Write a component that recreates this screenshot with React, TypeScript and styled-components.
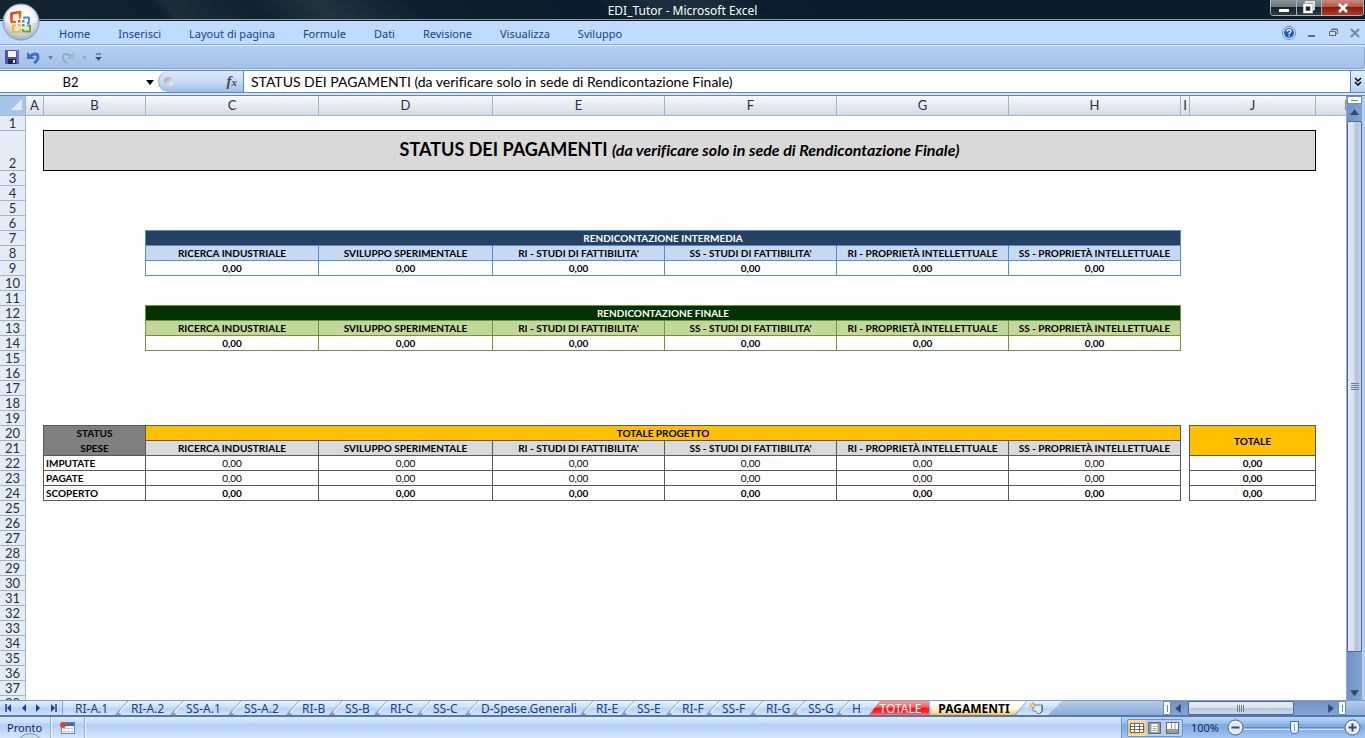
import React, { useState } from "react";
import styled, { createGlobalStyle, css } from "styled-components";

const UI_FONT = '"Noto Sans", "DejaVu Sans", sans-serif';
const SHEET_FONT = 'Lato, "Open Sans", sans-serif';

const GlobalStyle = createGlobalStyle`
  * { box-sizing: border-box; }
  body { margin: 0; overflow: hidden; font-family: ${UI_FONT}; font-size: 11px; font-variant-ligatures: none; }
  button, input { font: inherit; color: inherit; }
  button { border: 0; padding: 0; background: none; }
`;

const Window = styled.div`
  display: flex;
  flex-direction: column;
  height: 100vh;
  background: #d6e5f7;
  position: relative;
`;

/* ---------- title bar ---------- */

const TitleBar = styled.header`
  display: flex;
  flex: none;
  height: 21px;
  justify-content: center;
  position: relative;
  color: #fff;
  line-height: 21px;
  border-bottom: 1px solid #101820;
  box-shadow: inset 0 -1px 0 #8d9ba5;
  background: linear-gradient(52deg, #132431 0%, #0f202e 12%, #1c2d3a 13%, #10212f 19%, #22333f 24%, #0e1f30 31%, #0b1c2e 44%, #1c2e3d 48%, #1d2f3e 52%, #0c1d2f 56%, #0a1b2c 80%, #0c1e2d 100%);
`;

const Caption = styled.h1`
  margin: 0;
  font-size: 12px;
  font-weight: 400;
`;

const WindowControls = styled.div`
  position: absolute;
  right: 1px;
  top: 0;
  display: flex;
  height: 16px;
  border: 1px solid #a9b3ba;
  border-top: 0;
  border-radius: 0 0 4px 4px;
  overflow: hidden;
`;

const ControlButton = styled.button<{ $wide?: boolean; $close?: boolean }>`
  display: flex;
  align-items: center;
  justify-content: center;
  width: ${(p) => (p.$wide ? 42 : 25)}px;
  background: ${(p) =>
    p.$close
      ? "linear-gradient(#c58b82 0%, #b4574a 45%, #8c1a0c 50%, #b83a20 100%)"
      : "linear-gradient(#8a949c 0%, #6a757e 45%, #16222e 50%, #2d3b47 100%)"};
  & + & { border-left: 1px solid #a9b3ba; }
`;

/* ---------- ribbon ---------- */

const RibbonTabs = styled.nav`
  display: flex;
  flex: none;
  height: 24px;
  padding: 0 4px 0 45px;
  background: #bfdbff;
  border-bottom: 1px solid #86a8d4;
  align-items: center;
`;

const RibbonTab = styled.button`
  padding: 2px 14px 0;
  color: #15428b;
  line-height: 22px;
  white-space: nowrap;
`;

const DocControls = styled.div`
  display: flex;
  margin-left: auto;
  align-items: center;
  gap: 9px;
`;

const PlainButton = styled.button`
  display: flex;
  align-items: center;
  justify-content: center;
`;

const QuickAccess = styled.div`
  display: flex;
  flex: none;
  align-items: center;
  height: 24px;
  padding-left: 5px;
  gap: 8px;
  background: linear-gradient(#b6d0f0, #a5c0e8);
  border: 1px solid #86a8d4;
  border-top-color: #e8f2ff;
  border-left: 0;
  border-radius: 0 4px 4px 0;
`;

const OfficeButton = styled.button`
  position: absolute;
  left: 2px;
  top: 3px;
  width: 38px;
  height: 38px;
`;

/* ---------- formula bar ---------- */

const FormulaBar = styled.div`
  display: flex;
  flex: none;
  height: 23px;
  margin-top: 1px;
  border-top: 1px solid #5e88b8;
  border-bottom: 1px solid #5e88b8;
  background: #fff;
`;

const NameBox = styled.input`
  width: 141px;
  border: 0;
  padding: 0;
  text-align: center;
  font-family: ${SHEET_FONT};
  font-size: 13px;
  background: #fff;
  outline: 0;
`;

const NameArrow = styled.button`
  display: flex;
  width: 17px;
  align-items: center;
  justify-content: center;
`;

const FunctionArea = styled.div`
  display: flex;
  width: 86px;
  align-items: center;
  justify-content: space-between;
  padding: 0 6px 0 5px;
  border-left: 1px solid #8fa9cc;
  border-right: 1px solid #5e88b8;
  border-radius: 11px 0 0 11px;
  background: linear-gradient(#dce9fa, #c7dbf5 50%, #9fbfe8);
`;

const Knob = styled.span`
  width: 9px;
  height: 9px;
  border-radius: 50%;
  background: linear-gradient(135deg, #9aa4b8, #f4f7fb);
`;

const FxButton = styled.button`
  font-family: "Liberation Serif", serif;
  font-style: italic;
  font-size: 15px;
  font-weight: 700;
  color: #4a4a4a;
  small { font-size: 11px; }
`;

const FormulaInput = styled.input`
  flex: 1;
  min-width: 0;
  border: 0;
  padding: 0 7px;
  font-family: ${SHEET_FONT};
  font-size: 14px;
  color: #000;
  background: #fff;
  outline: 0;
`;

const ExpandButton = styled(PlainButton)`
  width: 15px;
  border-left: 1px solid #5e88b8;
  background: linear-gradient(#e4effd, #b5d0f2);
`;

/* ---------- sheet ---------- */

const Workspace = styled.main`
  display: flex;
  flex: 1;
  min-height: 0;
  margin-top: 2px;
  border-top: 1px solid #5e88b8;
`;

const SheetView = styled.div`
  flex: 1;
  min-width: 0;
  overflow: hidden;
  background: #fff;
`;

const Grid = styled.table`
  table-layout: fixed;
  width: 1382px;
  border-collapse: separate;
  border-spacing: 0;
  font-family: ${SHEET_FONT};
  font-size: 10px;
  line-height: 14px;
  color: #000;
`;

const Corner = styled.td`
  height: 20px;
  padding: 0 3px 3px 0;
  background: #a9c4e9;
  border-right: 1px solid #9eb6ce;
  border-bottom: 1px solid #9eb6ce;
  text-align: right;
  svg { display: block; margin-left: auto; }
`;

const ColumnHead = styled.th`
  height: 20px;
  padding: 0;
  font-size: 13px;
  line-height: 19px;
  font-weight: 400;
  color: #27323c;
  background: linear-gradient(#f8fafc, #e3e8ef 60%, #d4dbe5);
  border-right: 1px solid #9eb6ce;
  border-bottom: 1px solid #9eb6ce;
`;

const RowHead = styled.th`
  padding: 0;
  font-size: 13px;
  line-height: 14px;
  font-weight: 400;
  vertical-align: bottom;
  color: #27323c;
  background: #e4ecf7;
  border-right: 1px solid #9eb6ce;
  border-bottom: 1px solid #9eb6ce;
`;

const Row = styled.tr<{ $tall?: boolean }>`
  height: ${(p) => (p.$tall ? 40 : 15)}px;
`;

const Blank = styled.td`
  padding: 0;
`;

type CellProps = { $line: string; $fill?: string; $ink?: string; $bold?: boolean; $left?: boolean };

const Cell = styled.td<CellProps>`
  padding: 0 2px;
  overflow: hidden;
  white-space: nowrap;
  text-align: ${(p) => (p.$left ? "left" : "center")};
  font-weight: ${(p) => (p.$bold ? 700 : 400)};
  color: ${(p) => p.$ink ?? "#000"};
  background: ${(p) => p.$fill ?? "#fff"};
  border-right: 1px solid ${(p) => p.$line};
  border-bottom: 1px solid ${(p) => p.$line};
  box-shadow: -1px 0 0 ${(p) => p.$line}, 0 -1px 0 ${(p) => p.$line}, -1px -1px 0 ${(p) => p.$line};
`;

const SheetTitle = styled.strong`
  font-size: 18px;
`;

const SheetSubtitle = styled.em`
  font-size: 16px;
  font-weight: 700;
`;

const StackedLines = styled.div`
  display: grid;
  gap: 1px;
`;

/* ---------- scroll bars ---------- */

const ScrollColumn = styled.div`
  display: flex;
  flex: none;
  flex-direction: column;
  width: 19px;
  border-left: 1px solid #8fadd6;
  border-right: 3px solid #b4cdf0;
  background: linear-gradient(90deg, #6f93c3, #7fa3d3);
`;

const SplitHandle = styled.span<{ $vertical?: boolean }>`
  flex: none;
  display: flex;
  align-items: center;
  justify-content: center;
  width: ${(p) => (p.$vertical ? "8px" : "auto")};
  height: ${(p) => (p.$vertical ? "auto" : "8px")};
  border: 1px solid #6c8fc0;
  background: #fff;
  &::after {
    content: "";
    width: ${(p) => (p.$vertical ? 1 : 7)}px;
    height: ${(p) => (p.$vertical ? 7 : 1)}px;
    background: #5f86b8;
  }
`;

const ArrowButton = styled(PlainButton)`
  flex: none;
  width: 15px;
  height: 15px;
`;

const VerticalTrack = styled.div`
  flex: 1;
  display: flex;
  flex-direction: column;
  padding: 2px 0 33px;
`;

const thumb = css`
  display: flex;
  align-items: center;
  justify-content: center;
  border: 1px solid #4f6a98;
  border-radius: 2px;
`;

const VerticalThumb = styled.button`
  ${thumb}
  flex: 1;
  background: linear-gradient(90deg, #e3e8ef, #d7dfe9 45%, #b3c2d8 60%, #c7d2e2);
`;

/* ---------- sheet tabs ---------- */

const TabBar = styled.div`
  display: flex;
  flex: none;
  height: 17px;
  border-top: 1px solid #7d9fce;
  border-bottom: 2px solid #5379b3;
  background: linear-gradient(#b5cbec, #8fadd8);
`;

const TabNav = styled.div`
  display: flex;
  width: 63px;
  align-items: center;
  justify-content: space-around;
  padding: 0 2px;
  border-right: 1px solid #86a3cf;
  background: linear-gradient(#dfebfb, #c4daf7 50%, #b5d1f6 52%, #cfe2fa);
`;

const TabStrip = styled.div`
  display: flex;
  padding-left: 12px;
  color: #15428b;
  font-size: 12px;
  line-height: 16px;
  background: linear-gradient(#e9f2fd, #cfe1f9 45%, #b7d2f7 50%, #d3e4fb);
`;

const SheetTab = styled.button<{ $w: number }>`
  display: flex;
  justify-content: space-between;
  width: ${(p) => p.$w}px;
  padding-right: 2px;
  white-space: nowrap;
  svg { flex: none; }
`;

const RedTab = styled.button`
  width: 63px;
  padding-left: 6px;
  text-align: center;
  color: #fff;
  background: linear-gradient(#fb9a9a, #f76060 45%, #ff0d0d 50%, #f43030 80%, #f98080);
  clip-path: polygon(2px 100%, 4px 90%, 14px 0, 100% 0, 100% 100%);
`;

const ActiveTab = styled.button`
  width: 97px;
  padding-right: 7px;
  text-align: center;
  font-weight: 700;
  font-size: 12px;
  line-height: 16px;
  color: #000;
  background: linear-gradient(#fff, #fff6d8 60%, #fbd876 85%, #f0b850);
  clip-path: polygon(1px 0, 100% 0, calc(100% - 12px) 100%, 2px 100%);
`;

const InsertTab = styled(PlainButton)`
  width: 46px;
  margin-left: -10px;
  padding-right: 6px;
  background: linear-gradient(#e9f2fd, #cfe1f9 45%, #b7d2f7 50%, #d3e4fb);
  clip-path: polygon(12px 0, 100% 0, calc(100% - 14px) 100%, 0 100%);
`;

const HorizontalScroll = styled.div`
  display: flex;
  width: 183px;
  margin-left: auto;
  margin-right: 19px;
  background: linear-gradient(#6f93c3, #84a5d2);
`;

const HorizontalTrack = styled.div`
  display: flex;
  flex: 1;
  padding-left: 2px;
`;

const HorizontalThumb = styled.button`
  ${thumb}
  width: 106px;
  background: linear-gradient(#e9edf3, #dbe2ec 45%, #b9c7dc 55%, #cdd7e6);
`;

/* ---------- status bar ---------- */

const StatusBar = styled.footer`
  display: flex;
  flex: none;
  height: 21px;
  overflow: hidden;
  position: relative;
  color: #15275c;
  line-height: 20px;
  background: linear-gradient(#dceafb 0%, #c3dbf9 30%, #b2cff4 35%, #c4dbf8 70%, #d6e6fb 100%);
`;

const StatusItem = styled.span`
  display: flex;
  align-items: center;
  padding: 0 8px;
  border-right: 1px solid #8fb0de;
  box-shadow: 1px 0 0 #f2f8ff;
`;

const StatusText = styled(StatusItem)`
  padding-left: 7px;
`;

const StartOrb = styled.span`
  position: absolute;
  left: 16px;
  top: 16px;
  width: 28px;
  height: 28px;
  border-radius: 50%;
  border: 1px solid #7d97a8;
  background: #c5dceb;
`;

const ViewArea = styled.div`
  display: flex;
  margin-left: auto;
  align-items: center;
  width: 244px;
  padding: 0 4px 0 5px;
  border-left: 1px solid #7396c9;
  background: linear-gradient(#b9d3f5 0%, #9dbfee 30%, #7faae3 35%, #8db5eb 70%, #a5c8f5 100%);
`;

const ViewButtons = styled.div`
  display: flex;
  height: 18px;
  border: 1px solid #7396c9;
  border-radius: 2px;
  background: #b5cff2;
`;

const ViewButton = styled(PlainButton)<{ $on?: boolean }>`
  width: 18px;
  background: ${(p) => (p.$on ? "linear-gradient(#fbdc9c, #f9b84a 60%, #fde08a)" : "transparent")};
`;

const ZoomLabel = styled.label`
  width: 44px;
  text-align: center;
`;

const ZoomSlider = styled.input`
  appearance: none;
  flex: 1;
  min-width: 0;
  height: 16px;
  margin: 0;
  background: linear-gradient(#5f88c0, #5f88c0) center / 100% 1px no-repeat,
    linear-gradient(#dceafb, #dceafb) 0 9px / 100% 1px no-repeat;
  &::-webkit-slider-thumb {
    appearance: none;
    width: 9px;
    height: 13px;
    border: 1px solid #4a6a9c;
    border-radius: 1px 1px 5px 5px;
    background: linear-gradient(#8aa4ca, #8aa4ca) center / 1px 7px no-repeat, #eaf1fa;
  }
`;

/* ---------- drawings ---------- */

const Triangle = ({ dir, color = "#33466b", size = 7 }: { dir: "up" | "down" | "left" | "right"; color?: string; size?: number }) => {
  const d = { up: "M0 7L4 2L8 7Z", down: "M0 2L4 7L8 2Z", left: "M6 0L1 4L6 8Z", right: "M2 0L7 4L2 8Z" }[dir];
  return (
    <svg width={size} height={size} viewBox="0 0 8 8" aria-hidden="true"><path d={d} fill={color} /></svg>
  );
};

const Slash = () => (
  <svg width="14" height="14" viewBox="0 0 14 14" aria-hidden="true">
    <path d="M0 14L4 9L6 14Z" fill="#7f9dcd" />
    <path d="M1 13L13 0" stroke="#8fa9d0" strokeWidth="1" />
    <path d="M4 12L14 1" stroke="#fff" strokeWidth="1" />
  </svg>
);

const OfficeLogo = () => (
  <svg width="38" height="38" viewBox="0 0 38 38" aria-hidden="true">
    <defs>
      <radialGradient id="orb" cx="50%" cy="35%" r="65%">
        <stop offset="0" stopColor="#fff" />
        <stop offset="0.6" stopColor="#dfe4ec" />
        <stop offset="1" stopColor="#a6b0c2" />
      </radialGradient>
      <linearGradient id="red" x1="0" x2="1" y1="0" y2="1">
        <stop offset="0" stopColor="#d8340c" />
        <stop offset="1" stopColor="#f58a20" />
      </linearGradient>
    </defs>
    <circle cx="19" cy="19" r="18" fill="url(#orb)" stroke="#8c98ae" />
    <path d="M3 19a16 16 0 0 1 32 0q-16 5-32 0Z" fill="#fff" opacity=".5" />
    <g fill="none" strokeLinejoin="round">
      <path d="M14 19H9.500V10.500L18 9V15.500" stroke="url(#red)" strokeWidth="2.600" />
      <path d="M22 16V14.500H27V20H25" stroke="#3f8fd8" strokeWidth="1.800" />
      <path d="M14 22.500H11V29H18V26" stroke="#f7bd28" strokeWidth="2.200" />
      <path d="M21 26V28.500H28V22.500H25" stroke="#6aa82c" strokeWidth="2" />
    </g>
    <g>
      <rect x="16" y="17" width="2.500" height="2.500" fill="#e2500f" />
      <rect x="20" y="17" width="2.500" height="2.500" fill="#3f8fd8" />
      <rect x="16" y="21" width="2.500" height="2.500" fill="#f5b81c" />
      <rect x="20" y="21" width="2.500" height="2.500" fill="#6aa82c" />
    </g>
  </svg>
);

const SaveIcon = () => (
  <svg width="14" height="14" viewBox="0 0 14 14" aria-hidden="true">
    <path d="M0 0H14V14H1L0 13Z" fill="#5252b4" />
    <rect x="3" y="1" width="8" height="6" fill="#f4f7ff" />
    <rect x="3" y="9" width="8" height="5" fill="#22224e" />
    <rect x="8" y="10" width="2" height="3" fill="#fff" />
    <path d="M11 1H13V13" stroke="#8f8fe0" fill="none" />
  </svg>
);

const UndoIcon = ({ faded }: { faded?: boolean }) => (
  <svg width="13" height="13" viewBox="0 0 13 13" aria-hidden="true" transform={faded ? "scale(-1 1)" : undefined}>
    <path d="M3 6C6 2 11 2 11 6C11 9 9 11 7 12" fill="none" stroke={faded ? "#8ea6cb" : "#3c6fd0"} strokeWidth={faded ? 1.800 : 2.800} />
    <path d="M0 1V8H8Z" fill={faded ? "#9fb6d8" : "#3c6fd0"} />
  </svg>
);

const MoreIcon = () => (
  <svg width="7" height="8" viewBox="0 0 7 8" aria-hidden="true">
    <path d="M1 1H6" stroke="#2c4a80" />
    <path d="M0 4H7L3.500 7.500Z" fill="#2c4a80" />
  </svg>
);

const HelpIcon = () => (
  <svg width="14" height="14" viewBox="0 0 14 14" aria-hidden="true">
    <circle cx="7" cy="7" r="6.500" fill="#e6f0ff" stroke="#5a86c8" />
    <circle cx="7" cy="7" r="5" fill="#1e56d0" />
    <path d="M5 5.500Q5 3.800 7 3.800T9 5.500Q9 6.500 7 7.500V8.300M7 9.300V10.600" fill="none" stroke="#fff" strokeWidth="1.400" />
  </svg>
);

const MacroIcon = () => (
  <svg width="17" height="14" viewBox="0 0 17 14" aria-hidden="true">
    <rect x="2.500" y="1.500" width="13" height="11" fill="#f5f8ff" stroke="#6c86b4" />
    <path d="M3 2H15V5H3Z" fill="#3c68c0" />
    <path d="M4 7.500H14M4 10.500H14" stroke="#a6b6d4" strokeDasharray="3 1" />
    <circle cx="4" cy="4" r="3" fill="#d84a28" />
  </svg>
);

const InsertIcon = () => (
  <svg width="15" height="12" viewBox="0 0 15 12" aria-hidden="true">
    <path d="M4 3H13.500V9L11 11.500H8Q8 9 6 9H4Z" fill="#dfe9f8" stroke="#6d83ab" />
    <path d="M11 11L13 9V3" fill="none" stroke="#405a8a" />
    <path d="M3.500 0V7M0 3.500H7M1 1L6 6M6 1L1 6" stroke="#e59a24" />
    <circle cx="3.500" cy="3.500" r="1.200" fill="#fff3c0" />
  </svg>
);

const NavIcon = ({ dir, bar }: { dir: "left" | "right"; bar?: boolean }) => (
  <svg width="8" height="8" viewBox="0 0 8 8" aria-hidden="true" transform={dir === "right" ? "scale(-1 1)" : undefined}>
    {bar && <path d="M1 0V8" stroke="#15428b" strokeWidth="1.500" />}
    <path d="M6 0V8L2 4Z" fill="#15428b" />
  </svg>
);

const RoundIcon = ({ plus }: { plus?: boolean }) => (
  <svg width="17" height="17" viewBox="0 0 17 17" aria-hidden="true">
    <circle cx="8.500" cy="8.500" r="7.500" fill="#dfe8f5" stroke="#4a6288" />
    <circle cx="8.500" cy="8.500" r="6" fill="none" stroke="#fff" />
    <path d={plus ? "M4.500 8.500H12.500M8.500 4.500V12.500" : "M4.500 8.500H12.500"} stroke="#3e4e68" strokeWidth="2" />
  </svg>
);

const NormalViewIcon = () => (
  <svg width="14" height="12" viewBox="0 0 14 12" aria-hidden="true">
    <path d="M.5 1.500H13.500V10.500H.5ZM.5 4.500H13.500M.5 7.500H13.500M4.500 1.500V10.500M9.500 1.500V10.500" fill="#fff" stroke="#6a6a6a" />
  </svg>
);

const PageLayoutIcon = () => (
  <svg width="14" height="12" viewBox="0 0 14 12" aria-hidden="true">
    <rect x=".5" y=".5" width="12" height="11" fill="#9a9a9a" stroke="#6a6a6a" />
    <rect x="3.500" y="2" width="6" height="8" fill="#fff" />
    <path d="M5 4.500H8.500M5 6.500H8.500M5 8.500H8.500" stroke="#9a9a9a" />
  </svg>
);

const PageBreakIcon = () => (
  <svg width="14" height="12" viewBox="0 0 14 12" aria-hidden="true">
    <rect x=".5" y=".5" width="12" height="11" fill="#9a9a9a" stroke="#6a6a6a" />
    <path d="M1 1H5V7H1ZM6 1H8.500V7H6ZM9.500 1H12V7H9.500Z" fill="#fff" />
  </svg>
);

/* ---------- data ---------- */

const ribbon = ["Home", "Inserisci", "Layout di pagina", "Formule", "Dati", "Revisione", "Visualizza", "Sviluppo"];

const views = [
  { name: "Normale", Icon: NormalViewIcon },
  { name: "Layout di pagina", Icon: PageLayoutIcon },
  { name: "Anteprima interruzioni", Icon: PageBreakIcon },
];

const columns: [string, number][] = [
  ["A", 18], ["B", 102], ["C", 173], ["D", 174], ["E", 172], ["F", 172], ["G", 172], ["H", 172], ["I", 9], ["J", 126], ["K", 66],
];

const categories = [
  "RICERCA INDUSTRIALE",
  "SVILUPPO SPERIMENTALE",
  "RI - STUDI DI FATTIBILITA'",
  "SS - STUDI DI FATTIBILITA'",
  "RI - PROPRIETÀ INTELLETTUALE",
  "SS - PROPRIETÀ INTELLETTUALE",
];

const tabs: [string, number][] = [
  ["RI-A.1", 56], ["RI-A.2", 55], ["SS-A.1", 58], ["SS-A.2", 58], ["RI-B", 43], ["SS-B", 45], ["RI-C", 43], ["SS-C", 48],
  ["D-Spese.Generali", 115], ["RI-E", 41], ["SS-E", 45], ["RI-F", 40], ["SS-F", 44], ["RI-G", 42], ["SS-G", 44],
];

const BLUE = "#538ed5";
const GREEN = "#76933c";
const GREY = "#595959";

const CategoryCells = ({ line, fill }: { line: string; fill: string }) => (
  <>{categories.map((c) => <Cell key={c} $line={line} $fill={fill} $bold>{c}</Cell>)}</>
);

const ValueCells = ({ line, bold }: { line: string; bold?: boolean }) => (
  <>{categories.map((c) => <Cell key={c} $line={line} $bold={bold}>0,00</Cell>)}</>
);

const statusRows: Record<number, string> = { 22: "IMPUTATE", 23: "PAGATE", 24: "SCOPERTO" };

const rowContent = (n: number): React.ReactNode => {
  if (n === 2)
    return (
      <>
        <Blank />
        <Cell colSpan={9} $line="#000" $fill="#d9d9d9">
          <SheetTitle>STATUS DEI PAGAMENTI </SheetTitle>
          <SheetSubtitle>(da verificare solo in sede di Rendicontazione Finale)</SheetSubtitle>
        </Cell>
      </>
    );
  if (n === 7 || n === 12)
    return (
      <>
        <Blank colSpan={2} />
        <Cell colSpan={6} $line={n === 7 ? BLUE : GREEN} $fill={n === 7 ? "#254061" : "#003300"} $ink="#fff" $bold>
          {n === 7 ? "RENDICONTAZIONE INTERMEDIA" : "RENDICONTAZIONE FINALE"}
        </Cell>
      </>
    );
  if (n === 8) return <><Blank colSpan={2} /><CategoryCells line={BLUE} fill="#c5d9f1" /></>;
  if (n === 9) return <><Blank colSpan={2} /><ValueCells line={BLUE} bold /></>;
  if (n === 13) return <><Blank colSpan={2} /><CategoryCells line={GREEN} fill="#c4d79b" /></>;
  if (n === 14) return <><Blank colSpan={2} /><ValueCells line={GREEN} bold /></>;
  if (n === 20)
    return (
      <>
        <Blank />
        <Cell rowSpan={2} $line={GREY} $fill="#808080" $bold>
          <StackedLines>
            <span>STATUS</span>
            <span>SPESE</span>
          </StackedLines>
        </Cell>
        <Cell colSpan={6} $line={GREY} $fill="#ffc000" $bold>TOTALE PROGETTO</Cell>
        <Blank />
        <Cell rowSpan={2} $line={GREY} $fill="#ffc000" $bold>TOTALE</Cell>
      </>
    );
  if (n === 21) return <><Blank /><CategoryCells line={GREY} fill="#d9d9d9" /></>;
  if (statusRows[n])
    return (
      <>
        <Blank />
        <Cell $line={GREY} $bold $left>{statusRows[n]}</Cell>
        <ValueCells line={GREY} bold={n === 24} />
        <Blank />
        <Cell $line={GREY} $bold>0,00</Cell>
      </>
    );
  return <Blank colSpan={11} />;
};

export default function App() {
  const [formula, setFormula] = useState("STATUS DEI PAGAMENTI (da verificare solo in sede di Rendicontazione Finale)");
  const [cellName, setCellName] = useState("B2");
  const [zoom, setZoom] = useState(100);

  return (
    <Window>
      <GlobalStyle />
      <TitleBar>
        <Caption>EDI_Tutor - Microsoft Excel</Caption>
        <WindowControls>
          <ControlButton aria-label="Riduci a icona">
            <svg width="12" height="12" viewBox="0 0 12 12"><rect x="1" y="7" width="10" height="3" fill="#fff" /></svg>
          </ControlButton>
          <ControlButton aria-label="Ripristina">
            <svg width="12" height="13" viewBox="0 0 12 13" fill="none" stroke="#fff"><path d="M3 2.500V1H11V8.500H9.500" strokeWidth="1.500" /><path d="M1.500 4H8.500V11H1.500Z" strokeWidth="2.500" /></svg>
          </ControlButton>
          <ControlButton $wide $close aria-label="Chiudi">
            <svg width="12" height="10" viewBox="0 0 12 10"><path d="M2 1L10 9M10 1L2 9" stroke="#fff" strokeWidth="2.800" /></svg>
          </ControlButton>
        </WindowControls>
      </TitleBar>

      <RibbonTabs>
        {ribbon.map((r) => <RibbonTab key={r}>{r}</RibbonTab>)}
        <DocControls>
          <PlainButton aria-label="Guida"><HelpIcon /></PlainButton>
          <PlainButton aria-label="Riduci finestra"><svg width="13" height="12" viewBox="0 0 13 12"><path d="M3 9H10" stroke="#6b6b6b" strokeWidth="2" /></svg></PlainButton>
          <PlainButton aria-label="Ripristina finestra"><svg width="13" height="12" viewBox="0 0 13 12" fill="none" stroke="#6b6b6b"><path d="M4.500 4V2.500H10.500V6.500H8M4.500 2H10.500" /><path d="M2.500 4.500H8.500V8.500H2.500Z" /></svg></PlainButton>
          <PlainButton aria-label="Chiudi finestra"><svg width="12" height="12" viewBox="0 0 12 12"><path d="M2 2L10 10M10 2L2 10" stroke="#7d8590" strokeWidth="2" /></svg></PlainButton>
        </DocControls>
      </RibbonTabs>

      <QuickAccess>
        <PlainButton aria-label="Salva"><SaveIcon /></PlainButton>
        <PlainButton aria-label="Annulla"><UndoIcon /></PlainButton>
        <PlainButton aria-label="Elenco annulla"><Triangle dir="down" color="#5078b8" size={5} /></PlainButton>
        <PlainButton aria-label="Ripeti"><UndoIcon faded /></PlainButton>
        <PlainButton aria-label="Elenco ripeti"><Triangle dir="down" color="#8fa6c8" size={5} /></PlainButton>
        <PlainButton aria-label="Personalizza"><MoreIcon /></PlainButton>
      </QuickAccess>

      <OfficeButton aria-label="Pulsante Office"><OfficeLogo /></OfficeButton>

      <FormulaBar>
        <NameBox aria-label="Casella nome" value={cellName} onChange={(e) => setCellName(e.target.value)} />
        <NameArrow aria-label="Elenco nomi"><Triangle dir="down" color="#000" size={8} /></NameArrow>
        <FunctionArea>
          <Knob />
          <FxButton aria-label="Inserisci funzione">f<small>x</small></FxButton>
        </FunctionArea>
        <FormulaInput aria-label="Barra della formula" value={formula} onChange={(e) => setFormula(e.target.value)} />
        <ExpandButton aria-label="Espandi barra">
          <svg width="8" height="9" viewBox="0 0 8 9" fill="none" stroke="#000" strokeWidth="1.500"><path d="M1 1L4 4L7 1M1 5L4 8L7 5" /></svg>
        </ExpandButton>
      </FormulaBar>

      <Workspace>
        <SheetView>
          <Grid>
            <colgroup>
              <col width={26} />
              {columns.map(([name, w]) => <col key={name} width={w} />)}
            </colgroup>
            <thead>
              <tr>
                <Corner><svg width="11" height="11" viewBox="0 0 11 11" aria-hidden="true"><path d="M11 0V11H0Z" fill="#dfeafa" /></svg></Corner>
                {columns.map(([name]) => <ColumnHead key={name} scope="col">{name}</ColumnHead>)}
              </tr>
            </thead>
            <tbody>
              {Array.from({ length: 38 }, (_, i) => i + 1).map((n) => (
                <Row key={n} $tall={n === 2}>
                  <RowHead scope="row">{n}</RowHead>
                  {rowContent(n)}
                </Row>
              ))}
            </tbody>
          </Grid>
        </SheetView>
        <ScrollColumn>
          <SplitHandle />
          <ArrowButton aria-label="Scorri su"><Triangle dir="up" size={9} /></ArrowButton>
          <VerticalTrack>
            <VerticalThumb aria-label="Scorrimento verticale">
              <svg width="8" height="8" viewBox="0 0 8 8" aria-hidden="true"><path d="M0 .5H8M0 2.500H8M0 4.500H8M0 6.500H8" stroke="#6f7f98" /></svg>
            </VerticalThumb>
          </VerticalTrack>
          <ArrowButton aria-label="Scorri giù"><Triangle dir="down" size={9} /></ArrowButton>
        </ScrollColumn>
      </Workspace>

      <TabBar>
        <TabNav>
          <PlainButton aria-label="Primo foglio"><NavIcon dir="left" bar /></PlainButton>
          <PlainButton aria-label="Foglio precedente"><NavIcon dir="left" /></PlainButton>
          <PlainButton aria-label="Foglio successivo"><NavIcon dir="right" /></PlainButton>
          <PlainButton aria-label="Ultimo foglio"><NavIcon dir="right" bar /></PlainButton>
        </TabNav>
        <TabStrip>
          {tabs.map(([name, w]) => <SheetTab key={name} $w={w}>{name}<Slash /></SheetTab>)}
          <SheetTab $w={14}>H</SheetTab>
          <RedTab>TOTALE</RedTab>
        </TabStrip>
        <ActiveTab>PAGAMENTI</ActiveTab>
        <InsertTab aria-label="Inserisci foglio"><InsertIcon /></InsertTab>
        <HorizontalScroll>
          <SplitHandle $vertical />
          <ArrowButton aria-label="Scorri a sinistra"><Triangle dir="left" size={9} /></ArrowButton>
          <HorizontalTrack>
            <HorizontalThumb aria-label="Scorrimento orizzontale">
              <svg width="8" height="7" viewBox="0 0 8 7" aria-hidden="true"><path d="M.5 0V7M2.500 0V7M4.500 0V7M6.500 0V7" stroke="#6f7f98" /></svg>
            </HorizontalThumb>
          </HorizontalTrack>
          <ArrowButton aria-label="Scorri a destra"><Triangle dir="right" size={9} /></ArrowButton>
          <SplitHandle $vertical />
        </HorizontalScroll>
      </TabBar>

      <StatusBar>
        <StatusText>Pronto</StatusText>
        <StatusItem><MacroIcon /></StatusItem>
        <StartOrb />
        <ViewArea>
          <ViewButtons>
            {views.map(({ name, Icon }, i) => (
              <ViewButton key={name} aria-label={name} $on={i === 0}><Icon /></ViewButton>
            ))}
          </ViewButtons>
          <ZoomLabel htmlFor="zoom">{zoom}%</ZoomLabel>
          <PlainButton aria-label="Zoom indietro"><RoundIcon /></PlainButton>
          <ZoomSlider id="zoom" type="range" min={0} max={200} value={zoom} onChange={(e) => setZoom(Number(e.target.value))} />
          <PlainButton aria-label="Zoom avanti"><RoundIcon plus /></PlainButton>
        </ViewArea>
      </StatusBar>
    </Window>
  );
}
